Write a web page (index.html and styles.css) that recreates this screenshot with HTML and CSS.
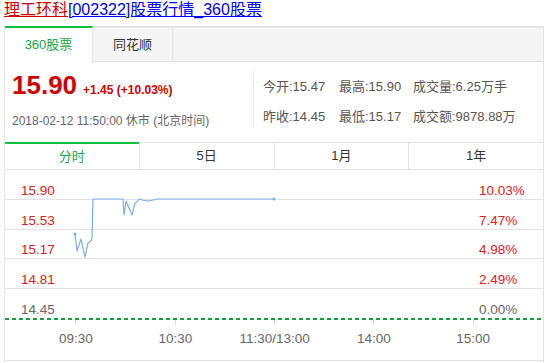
FILE: index.html
```html
<!DOCTYPE html>
<html lang="zh-CN">

<head>
    <meta charset="UTF-8">
    <meta name="viewport" content="width=device-width, initial-scale=1.0">
    <title>理工环科[002322]股票行情_360股票</title>
    <link rel="stylesheet" href="styles.css">
</head>

<body>
    <div class="page-title">
        <a class="stock-name" href="#">理工环科</a><a class="stock-link" href="#">[002322]股票行情_360股票</a>
    </div>

    <div class="panel">
        <div class="source-tabs">
            <div class="source-tab active">360股票</div>
            <div class="source-tab">同花顺</div>
        </div>

        <div class="quote">
            <div class="quote-main">
                <div class="price-line">
                    <span class="price">15.90</span><span class="change">+1.45 (+10.03%)</span>
                </div>
                <div class="quote-time">2018-02-12 11:50:00 休市 (北京时间)</div>
            </div>
            <div class="quote-info">
                <span>今开:15.47</span>
                <span>最高:15.90</span>
                <span>成交量:6.25万手</span>
                <span>昨收:14.45</span>
                <span>最低:15.17</span>
                <span>成交额:9878.88万</span>
            </div>
        </div>

        <div class="period-tabs">
            <div class="period-tab active">分时</div>
            <div class="period-tab">5日</div>
            <div class="period-tab">1月</div>
            <div class="period-tab">1年</div>
        </div>

        <div class="chart">
            <div class="chart-row"><span class="up">15.90</span><span class="pct up">10.03%</span></div>
            <div class="chart-row"><span class="up">15.53</span><span class="pct up">7.47%</span></div>
            <div class="chart-row"><span class="up">15.17</span><span class="pct up">4.98%</span></div>
            <div class="chart-row"><span class="up">14.81</span><span class="pct up">2.49%</span></div>
            <div class="chart-row last"><span class="flat">14.45</span><span class="pct flat">0.00%</span></div>
            <div class="zero-line"></div>

            <!-- intraday price line, chart coords start at the top-left of the first row -->
            <svg class="price-path" width="538" height="148" viewBox="0 0 538 148">
                <polyline fill="none" stroke="#7eaef0" stroke-width="1.2" stroke-linejoin="round"
                    points="70,64 72,81 76,69 80,87 83,73 86,71 87,68 88,29 118,29 119,45 121,31 127,45 130,33 132,32 133,30 135,29 137,30 143,31 148,30 153,29 269,29" />
                <circle cx="70" cy="64" r="1.6" fill="#7eaef0" />
                <circle cx="269" cy="29" r="1.6" fill="#7eaef0" />
            </svg>
        </div>

        <div class="time-axis">
            <div class="time-cell"><i class="tick"></i><span>09:30</span></div>
            <div class="time-cell"><i class="tick"></i><span>10:30</span></div>
            <div class="time-cell"><i class="tick"></i><span>11:30/13:00</span></div>
            <div class="time-cell"><i class="tick"></i><span>14:00</span></div>
            <div class="time-cell"><i class="tick"></i><span>15:00</span></div>
        </div>
        <div class="panel-tail"></div>
    </div>
</body>

</html>
```

FILE: styles.css
```css
body {
    font-family: "Liberation Sans", "Noto Sans CJK SC", sans-serif;
    background-color: #fff;
    margin: 0;
    padding: 0 4px;
}

.page-title {
    font-size: 16px;
    line-height: 20px;
    margin-bottom: 6px;
    white-space: nowrap;
}

.page-title a {
    color: #0000ee;
}

.page-title a.stock-name {
    color: #cc0000;
}

.panel {
    width: 540px;
    box-sizing: border-box;
    border: 1px solid #e3e3e3;
    border-bottom: none;
}

/* source tabs */
.source-tabs {
    display: flex;
    height: 33px;
    background-color: #f5f5f5;
    border-top: 1px solid #e8e8e8;
    border-bottom: 1px solid #e3e3e3;
}

.source-tab {
    width: 79px;
    line-height: 33px;
    text-align: center;
    font-size: 13px;
    color: #333;
    border-right: 1px solid #e3e3e3;
}

.source-tab.active {
    width: 87px;
    background-color: #fff;
    color: #1ba448;
    border-top: 2px solid #10c040;
    margin-top: -2px;
    margin-bottom: -1px;
    line-height: 34px;
}

/* quote */
.quote {
    display: flex;
    height: 80px;
    border-bottom: 1px solid #e3e3e3;
}

.quote-main {
    width: 248px;
    box-sizing: border-box;
    padding: 8px 0 0 7px;
}

.price-line {
    line-height: 30px;
    white-space: nowrap;
}

.price {
    font-size: 26px;
    font-weight: bold;
    color: #d00000;
}

.change {
    margin-left: 6px;
    font-size: 12px;
    font-weight: bold;
    color: #d00000;
}

.quote-time {
    margin-top: 8px;
    font-size: 12px;
    line-height: 16px;
    color: #666;
    white-space: nowrap;
}

.quote-info {
    display: grid;
    grid-template-columns: 76px 74px auto;
    grid-auto-rows: 30px;
    align-items: center;
    align-content: start;
    height: 59px;
    margin-top: 6px;
    padding: 2px 0 0 9px;
    box-sizing: border-box;
    border-left: 1px dotted #dcdcdc;
    font-size: 13px;
    color: #555;
    white-space: nowrap;
}

/* period tabs */
.period-tabs {
    display: flex;
    height: 26px;
    border-bottom: 1px solid #e3e3e3;
}

.period-tab {
    flex: 1;
    line-height: 26px;
    text-align: center;
    font-size: 13px;
    color: #333;
    border-left: 1px solid #e3e3e3;
}

.period-tab:first-child {
    border-left: none;
}

.period-tab.active {
    color: #1ba448;
    border-top: 2px solid #10c040;
    margin-top: -1px;
    line-height: 25px;
}

/* chart */
.chart {
    position: relative;
}

.chart-row {
    display: flex;
    justify-content: space-between;
    align-items: flex-end;
    height: 28.75px;
    padding-left: 16px;
    border-bottom: 1px solid #e3e3e3;
    font-size: 13.5px;
    line-height: 16px;
}

.chart-row.last {
    border-bottom: none;
}

.chart-row .pct {
    width: 64px;
}

.up {
    color: #e02020;
}

.flat {
    color: #666;
}

.zero-line {
    height: 2px;
    background: repeating-linear-gradient(to right, #12a03c 0 4px, transparent 4px 7px);
}

.price-path {
    position: absolute;
    top: 0;
    left: 0;
}

/* time axis */
.time-axis {
    display: grid;
    grid-template-columns: repeat(5, 99.3px);
    height: 40px;
    padding-left: 21.35px;
    border-bottom: 1px solid #e3e3e3;
}

.time-cell {
    display: flex;
    flex-direction: column;
    align-items: center;
}

.tick {
    width: 1px;
    height: 5px;
    background-color: #dcdcdc;
}

.time-cell span {
    margin-top: 6px;
    font-size: 13.5px;
    line-height: 16px;
    color: #666;
    white-space: nowrap;
}

.panel-tail {
    height: 20px;
}
```
